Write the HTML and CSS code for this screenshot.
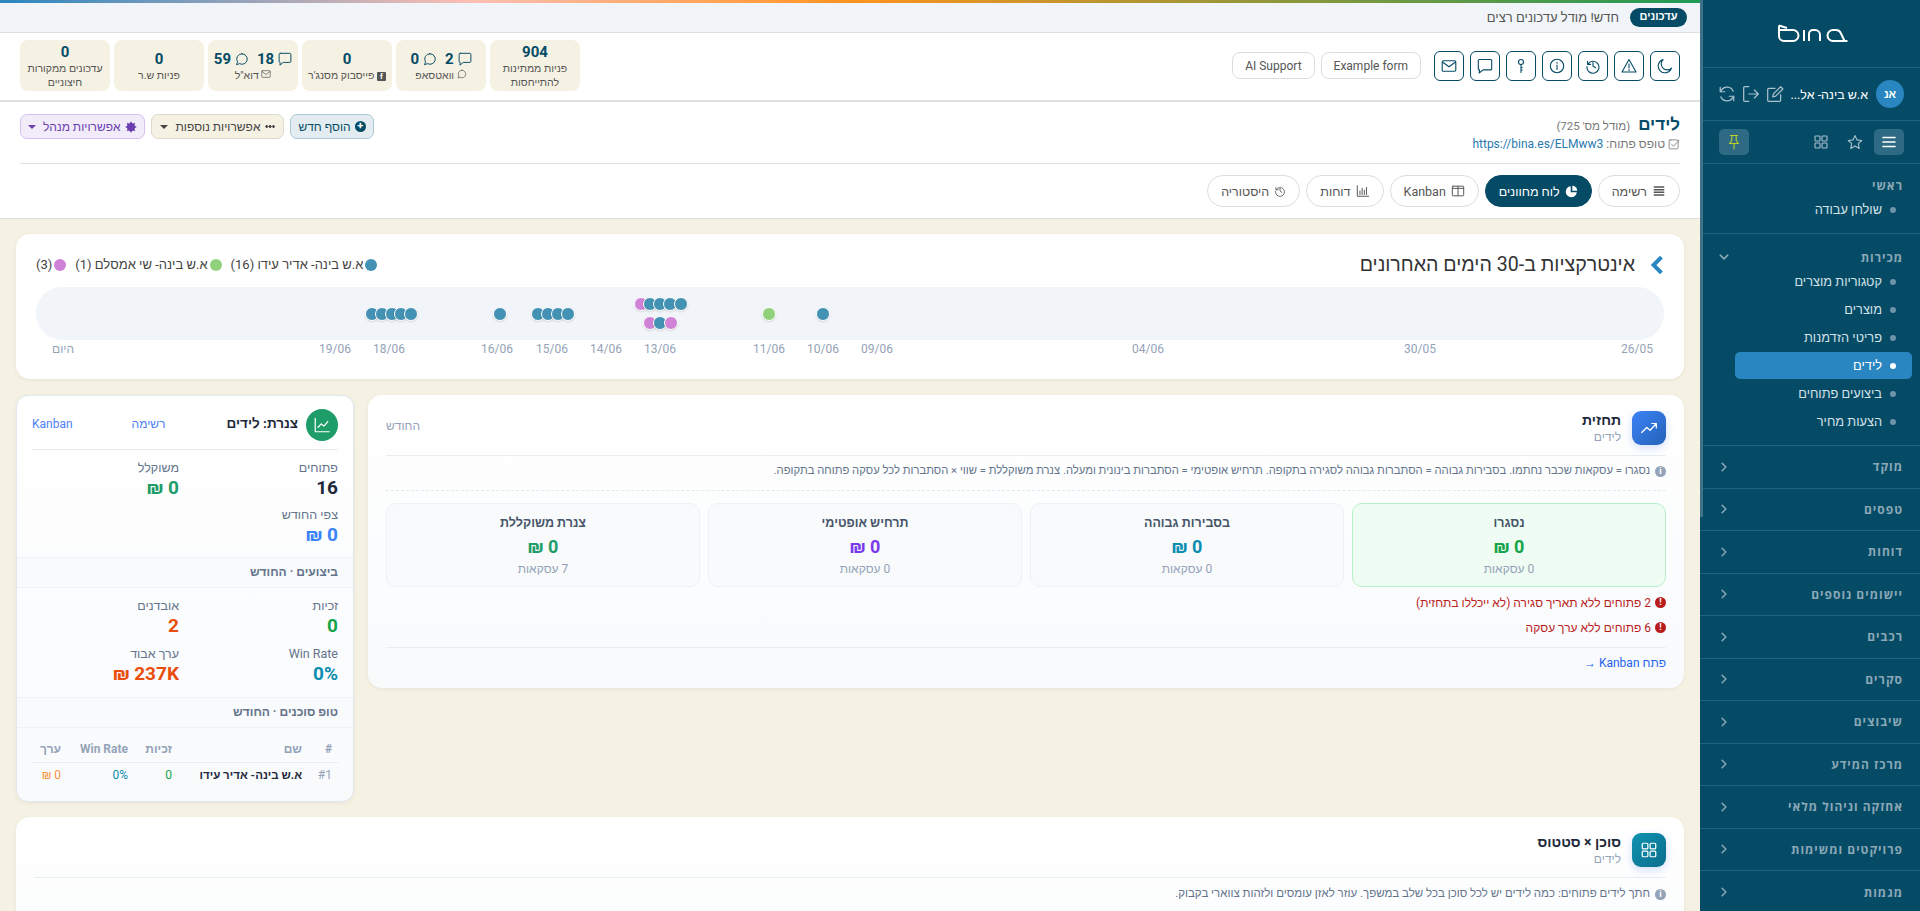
FILE: index.html
```html
<!DOCTYPE html>
<html lang="he" dir="rtl">
<head>
    <meta charset="UTF-8" />
    <title>לידים - Bina</title>
    <link rel="stylesheet" href="styles.css">
</head>
<body>
    <svg class="sprite" xmlns="http://www.w3.org/2000/svg">
        <symbol id="i-moon" viewBox="0 0 16 16"><path d="M6 1.500a6.800 6.800 0 1 0 8.500 8.600A6 6 0 0 1 6 1.500z"/></symbol>
        <symbol id="i-warn" viewBox="0 0 16 16"><path d="M8 1.500 15 14H1zM8 6v4M8 11.600v.8"/></symbol>
        <symbol id="i-history" viewBox="0 0 16 16"><path d="M2.600 3.400v3h3M2.800 6.200A6 6 0 1 1 2 8.500M8 4.500V8l2.500 1.800"/></symbol>
        <symbol id="i-info" viewBox="0 0 16 16"><circle cx="8" cy="8" r="6.700"/><path d="M8 7v4.500M8 4.300v.9"/></symbol>
        <symbol id="i-key" viewBox="0 0 16 16"><circle cx="8" cy="4" r="2.500"/><path d="M8 6.500v8M8 9.500h1.200M8 12h1.200"/></symbol>
        <symbol id="i-chat" viewBox="0 0 16 16"><path d="M2.500 1.500h11a1.200 1.200 0 0 1 1.200 1.200v8a1.200 1.200 0 0 1-1.200 1.200H6L2.200 15l.3-3.100a1.200 1.200 0 0 1-1.200-1.200v-8a1.200 1.200 0 0 1 1.200-1.200z"/></symbol>
        <symbol id="i-round" viewBox="0 0 16 16"><path d="M8 2a6 6 0 1 1-2.800 11.300L1.800 14.500l1.100-3.300A6 6 0 0 1 8 2z"/></symbol>
        <symbol id="i-mail" viewBox="0 0 16 16"><rect x="1.200" y="2.700" width="13.600" height="10.600" rx="1.200"/><path d="m1.500 4 6.500 4.800L14.500 4"/></symbol>
        <symbol id="i-list" viewBox="0 0 16 16"><path d="M2 3.500h12M2 6.500h12M2 9.500h12M2 12.500h12"/></symbol>
        <symbol id="i-menu" viewBox="0 0 16 16"><path d="M2 3.500h12M2 8h12M2 12.500h12"/></symbol>
        <symbol id="i-columns" viewBox="0 0 16 16"><rect x="1.500" y="2.500" width="13" height="11" rx=".8"/><path d="M8 2.500v11M1.500 5h13"/></symbol>
        <symbol id="i-bars" viewBox="0 0 16 16"><path d="M1.500 2v12h13M4.500 12V8M7 12V5M9.500 12V7M12 12V4"/></symbol>
        <symbol id="i-chevron" viewBox="0 0 16 16"><path d="m5.500 3 5 5-5 5"/></symbol>
        <symbol id="i-check" viewBox="0 0 16 16"><rect x="1.500" y="2.500" width="12" height="12" rx="1.500"/><path d="m4.500 8 3 3 7-8"/></symbol>
        <symbol id="i-trend" viewBox="0 0 16 16"><path d="m1.500 12 4.500-4.500 3 2.500L14.500 4M10.500 4h4v4"/></symbol>
        <symbol id="i-line" viewBox="0 0 16 16"><path d="M2 2v12h12.500M4.500 10l2.800-3 2.400 2 3.400-4"/></symbol>
        <symbol id="i-grid" viewBox="0 0 16 16"><rect x="2" y="2" width="5" height="5" rx=".8"/><rect x="9" y="2" width="5" height="5" rx=".8"/><rect x="2" y="9" width="5" height="5" rx=".8"/><rect x="9" y="9" width="5" height="5" rx=".8"/></symbol>
        <symbol id="i-star" viewBox="0 0 16 16"><path d="m8 1.600 2 4.300 4.700.6-3.400 3.200.9 4.700L8 12.100l-4.200 2.300.9-4.700-3.400-3.200L6 5.900z"/></symbol>
        <symbol id="i-pin" viewBox="0 0 16 16"><path d="M4.500 1.500h7M5.800 1.500v5L3.500 9.500h9l-2.300-3v-5M8 9.500V15"/></symbol>
        <symbol id="i-sync" viewBox="0 0 16 16"><path d="M13.500 5.500A6 6 0 0 0 3 4.500L2 6M2.500 10.500A6 6 0 0 0 13 11.500L14 10M2 2v4h4M14 14v-4h-4"/></symbol>
        <symbol id="i-logout" viewBox="0 0 16 16"><path d="M6 1.500H2.500a1 1 0 0 0-1 1v11a1 1 0 0 0 1 1H6M6 8h8.500M11 4.500 14.500 8 11 11.500"/></symbol>
        <symbol id="i-edit" viewBox="0 0 16 16"><path d="M13 8.500v5a1 1 0 0 1-1 1H2.500a1 1 0 0 1-1-1V4a1 1 0 0 1 1-1H8M6 10.500l.6-2.600L13 1.500l2 2-6.400 6.400z"/></symbol>
    </svg>

    <aside class="sidebar">
        <div class="side-logo">
            <svg class="logo" viewBox="0 0 70 18" aria-label="bina">
                <path d="M1 1.500 9 4M1 1.500V12a5 5 0 0 0 5 5h9a5.500 5.500 0 0 0 0-11H1M26 6v11M31 17V10a4 4 0 0 1 4-4h2a5 5 0 0 1 5 5v6M69.500 17H66.500L63 9.500A5.500 5.500 0 0 0 58 6h-3a5.500 5.500 0 0 0 0 11h11"/>
            </svg>
        </div>
        <div class="side-user">
            <span class="avatar">אנ</span>
            <span class="user-name">א.ש בינה- אל...</span>
            <span class="user-tools">
                <svg class="ic ic-18"><use href="#i-edit"/></svg>
                <svg class="ic ic-18"><use href="#i-logout"/></svg>
                <svg class="ic ic-18"><use href="#i-sync"/></svg>
            </span>
        </div>
        <div class="side-tabs">
            <span class="side-tab active"><svg class="ic ic-16"><use href="#i-menu"/></svg></span>
            <span class="side-tab"><svg class="ic ic-16"><use href="#i-star"/></svg></span>
            <span class="side-tab"><svg class="ic ic-16"><use href="#i-grid"/></svg></span>
            <span class="side-tab pin"><svg class="ic ic-16"><use href="#i-pin"/></svg></span>
        </div>
        <nav class="side-nav">
            <div class="nav-group">
                <div class="nav-title"><span>ראשי</span></div>
                <a class="nav-item">שולחן עבודה</a>
            </div>
            <div class="nav-group open">
                <div class="nav-title"><span>מכירות</span><svg class="ic ic-12 down"><use href="#i-chevron"/></svg></div>
                <a class="nav-item">קטגוריות מוצרים</a>
                <a class="nav-item">מוצרים</a>
                <a class="nav-item">פריטי הזדמנות</a>
                <a class="nav-item current">לידים</a>
                <a class="nav-item">ביצועים פתוחים</a>
                <a class="nav-item">הצעות מחיר</a>
            </div>
            <div class="nav-row"><span>מוקד</span><svg class="ic ic-12"><use href="#i-chevron"/></svg></div>
            <div class="nav-row"><span>טפסים</span><svg class="ic ic-12"><use href="#i-chevron"/></svg></div>
            <div class="nav-row"><span>דוחות</span><svg class="ic ic-12"><use href="#i-chevron"/></svg></div>
            <div class="nav-row"><span>יישומים נוספים</span><svg class="ic ic-12"><use href="#i-chevron"/></svg></div>
            <div class="nav-row"><span>רכבים</span><svg class="ic ic-12"><use href="#i-chevron"/></svg></div>
            <div class="nav-row"><span>סקרים</span><svg class="ic ic-12"><use href="#i-chevron"/></svg></div>
            <div class="nav-row"><span>שיבוצים</span><svg class="ic ic-12"><use href="#i-chevron"/></svg></div>
            <div class="nav-row"><span>מרכז המידע</span><svg class="ic ic-12"><use href="#i-chevron"/></svg></div>
            <div class="nav-row"><span>אחזקה וניהול מלאי</span><svg class="ic ic-12"><use href="#i-chevron"/></svg></div>
            <div class="nav-row"><span>פרויקטים ומשימות</span><svg class="ic ic-12"><use href="#i-chevron"/></svg></div>
            <div class="nav-row"><span>מגמות</span><svg class="ic ic-12"><use href="#i-chevron"/></svg></div>
        </nav>
        <div class="side-thumb"></div>
    </aside>

    <main class="main">
        <div class="grad-bar"></div>
        <div class="update-strip">
            <span class="update-pill">עדכונים</span>
            <span class="update-text">חדש! מודל עדכונים רצים</span>
        </div>

        <header class="top-row">
            <div class="top-actions">
                <div class="icon-btns">
                    <button class="icon-btn"><svg class="ic ic-16"><use href="#i-moon"/></svg></button>
                    <button class="icon-btn"><svg class="ic ic-16"><use href="#i-warn"/></svg></button>
                    <button class="icon-btn"><svg class="ic ic-16"><use href="#i-history"/></svg></button>
                    <button class="icon-btn"><svg class="ic ic-16"><use href="#i-info"/></svg></button>
                    <button class="icon-btn"><svg class="ic ic-16"><use href="#i-key"/></svg></button>
                    <button class="icon-btn"><svg class="ic ic-16"><use href="#i-chat"/></svg></button>
                    <button class="icon-btn"><svg class="ic ic-16"><use href="#i-mail"/></svg></button>
                </div>
                <div class="soft-btns">
                    <button class="soft-btn">Example form</button>
                    <button class="soft-btn">AI Support</button>
                </div>
            </div>
            <div class="stat-cards">
                <div class="stat-card"><b>904</b><small>פניות ממתינות להתייחסות</small></div>
                <div class="stat-card">
                    <b class="stat-line"><svg class="ic ic-14"><use href="#i-chat"/></svg>2<svg class="ic ic-14"><use href="#i-round"/></svg>0</b>
                    <small><svg class="ic ic-10"><use href="#i-round"/></svg> וואטסאפ</small>
                </div>
                <div class="stat-card">
                    <b>0</b>
                    <small><span class="fb-box">f</span> פייסבוק מסנג'ר</small>
                </div>
                <div class="stat-card">
                    <b class="stat-line"><svg class="ic ic-14"><use href="#i-chat"/></svg>18<svg class="ic ic-14"><use href="#i-round"/></svg>59</b>
                    <small><svg class="ic ic-10"><use href="#i-mail"/></svg> דוא"ל</small>
                </div>
                <div class="stat-card"><b>0</b><small>פניות ש.ר</small></div>
                <div class="stat-card"><b>0</b><small>עדכונים ממקורות חיצוניים</small></div>
            </div>
        </header>

        <section class="page-head">
            <div class="title-row">
                <div>
                    <div class="page-title"><h1>לידים</h1><span>(מודל מס' 725)</span></div>
                    <div class="page-form"><svg class="ic ic-12"><use href="#i-check"/></svg> טופס פתוח: <a>https://bina.es/ELMww3</a></div>
                </div>
                <div class="head-actions">
                    <button class="act-btn act-add"><span class="plus-dot">+</span> הוסף חדש</button>
                    <button class="act-btn act-more"><i class="dots"></i> אפשרויות נוספות <i class="caret"></i></button>
                    <button class="act-btn act-admin"><svg class="gear" viewBox="0 0 16 16"><circle cx="8" cy="8" r="4.500"/><path d="M8 1v14M1 8h14M3 3l10 10M13 3 3 13"/></svg> אפשרויות מנהל <i class="caret"></i></button>
                </div>
            </div>
            <div class="view-tabs">
                <a class="view-tab"><svg class="ic ic-14 bold"><use href="#i-list"/></svg> רשימה</a>
                <a class="view-tab active"><svg class="pie" viewBox="0 0 16 16"><path d="M7 1.500a6.800 6.800 0 1 0 7.500 7.500H7z"/><path d="M9 1a6 6 0 0 1 6 6H9z"/></svg> לוח מחוונים</a>
                <a class="view-tab"><svg class="ic ic-14"><use href="#i-columns"/></svg> Kanban</a>
                <a class="view-tab"><svg class="ic ic-14"><use href="#i-bars"/></svg> דוחות</a>
                <a class="view-tab"><svg class="ic ic-12"><use href="#i-history"/></svg> היסטוריה</a>
            </div>
        </section>

        <div class="content">
            <section class="card timeline">
                <div class="tl-head">
                    <h2><svg class="tl-chev" viewBox="4 1 10 16"><path d="m12.500 2-7 7 7 7"/></svg>אינטרקציות ב-30 הימים האחרונים</h2>
                    <div class="tl-legend">
                        <span><i class="dot-l blue"></i>א.ש בינה- אדיר עידו (16)</span>
                        <span><i class="dot-l green"></i>א.ש בינה- שי אמסלם (1)</span>
                        <span><i class="dot-l pink"></i>(3)</span>
                    </div>
                </div>
                <div class="tl-track">
                    <i class="tl-dot blue row-m" style="left:336px"></i>
                    <i class="tl-dot blue row-m" style="left:346px"></i>
                    <i class="tl-dot blue row-m" style="left:356px"></i>
                    <i class="tl-dot blue row-m" style="left:365px"></i>
                    <i class="tl-dot blue row-m" style="left:375px"></i>
                    <i class="tl-dot blue row-m" style="left:464px"></i>
                    <i class="tl-dot blue row-m" style="left:502px"></i>
                    <i class="tl-dot blue row-m" style="left:512px"></i>
                    <i class="tl-dot blue row-m" style="left:522px"></i>
                    <i class="tl-dot blue row-m" style="left:532px"></i>
                    <i class="tl-dot pink row-t" style="left:605px"></i>
                    <i class="tl-dot blue row-t" style="left:614px"></i>
                    <i class="tl-dot blue row-t" style="left:624px"></i>
                    <i class="tl-dot blue row-t" style="left:634px"></i>
                    <i class="tl-dot blue row-t" style="left:645px"></i>
                    <i class="tl-dot pink row-b" style="left:614px"></i>
                    <i class="tl-dot blue row-b" style="left:624px"></i>
                    <i class="tl-dot pink row-b" style="left:635px"></i>
                    <i class="tl-dot green row-m" style="left:733px"></i>
                    <i class="tl-dot blue row-m" style="left:787px"></i>
                </div>
                <div class="tl-axis">
                    <span style="left:27px">היום</span>
                    <span style="left:299px">19/06</span>
                    <span style="left:353px">18/06</span>
                    <span style="left:461px">16/06</span>
                    <span style="left:516px">15/06</span>
                    <span style="left:570px">14/06</span>
                    <span style="left:624px">13/06</span>
                    <span style="left:733px">11/06</span>
                    <span style="left:787px">10/06</span>
                    <span style="left:841px">09/06</span>
                    <span style="left:1112px">04/06</span>
                    <span style="left:1384px">30/05</span>
                    <span style="left:1601px">26/05</span>
                </div>
            </section>

            <div class="dash-row">
                <section class="card panel forecast">
                    <div class="panel-head">
                        <span class="panel-icon blue-grad"><svg class="ic ic-18"><use href="#i-trend"/></svg></span>
                        <div class="panel-title"><b>תחזית</b><small>לידים</small></div>
                        <span class="panel-period">החודש</span>
                    </div>
                    <p class="panel-note"><i class="note-i">i</i> נסגרו = עסקאות שכבר נחתמו. בסבירות גבוהה = הסתברות גבוהה לסגירה בתקופה. תרחיש אופטימי = הסתברות בינונית ומעלה. צנרת משוקללת = שווי × הסתברות לכל עסקה פתוחה בתקופה.</p>
                    <div class="kpi-grid">
                        <div class="kpi kpi-won"><b>נסגרו</b><strong class="c-green">0 ₪</strong><small>0 עסקאות</small></div>
                        <div class="kpi"><b>בסבירות גבוהה</b><strong class="c-teal">0 ₪</strong><small>0 עסקאות</small></div>
                        <div class="kpi"><b>תרחיש אופטימי</b><strong class="c-purple">0 ₪</strong><small>0 עסקאות</small></div>
                        <div class="kpi"><b>צנרת משוקללת</b><strong class="c-emerald">0 ₪</strong><small>7 עסקאות</small></div>
                    </div>
                    <div class="warn"><i class="warn-i">!</i> 2 פתוחים ללא תאריך סגירה (לא ייכללו בתחזית)</div>
                    <div class="warn"><i class="warn-i">!</i> 6 פתוחים ללא ערך עסקה</div>
                    <div class="panel-foot"><a>פתח Kanban →</a></div>
                </section>

                <section class="card funnel">
                    <div class="fn-head">
                        <span class="fn-icon"><svg class="ic ic-18"><use href="#i-line"/></svg></span>
                        <b class="fn-title">צנרת: לידים</b>
                        <a class="fn-link">רשימה</a>
                        <a class="fn-link">Kanban</a>
                    </div>
                    <div class="fn-stats">
                        <div><label>פתוחים</label><strong class="c-dark">16</strong></div>
                        <div><label>משוקלל</label><strong class="c-emerald">0 ₪</strong></div>
                        <div><label>צפי החודש</label><strong class="c-blue">0 ₪</strong></div>
                    </div>
                    <div class="fn-section">ביצועים · החודש</div>
                    <div class="fn-stats fn-perf">
                        <div><label>זכיות</label><strong class="c-green">0</strong></div>
                        <div><label>אובדנים</label><strong class="c-red">2</strong></div>
                        <div><label>Win Rate</label><strong class="c-teal">0%</strong></div>
                        <div><label>ערך אבוד</label><strong class="c-red">237K ₪</strong></div>
                    </div>
                    <div class="fn-section">טופ סוכנים · החודש</div>
                    <table class="fn-table">
                        <thead>
                            <tr><th>#</th><th>שם</th><th>זכיות</th><th>Win Rate</th><th>ערך</th></tr>
                        </thead>
                        <tbody>
                            <tr><td class="t-rank">#1</td><td class="t-name">א.ש בינה- אדיר עידו</td><td class="c-green">0</td><td class="c-teal">0%</td><td class="c-orange">0 ₪</td></tr>
                        </tbody>
                    </table>
                </section>
            </div>

            <section class="card panel agents">
                <div class="panel-head">
                    <span class="panel-icon teal-grad"><svg class="ic ic-18"><use href="#i-grid"/></svg></span>
                    <div class="panel-title"><b>סוכן × סטטוס</b><small>לידים</small></div>
                </div>
                <p class="panel-note"><i class="note-i">i</i> חתך לידים פתוחים: כמה לידים יש לכל סוכן בכל שלב במשפך. עוזר לאזן עומסים ולזהות צווארי בקבוק.</p>
            </section>
        </div>
    </main>
</body>
</html>
```

FILE: styles.css
```css
* {
    box-sizing: border-box;
}

html, body {
    height: 100%;
}

body {
    margin: 0;
    display: flex;
    overflow: hidden;
    font-family: Roboto, sans-serif;
    font-size: 12px;
    color: #334155;
    background: #f5f1e3;
}

.sprite {
    display: none;
}

.ic {
    fill: none;
    stroke: currentColor;
    stroke-width: 1.1;
    stroke-linecap: round;
    stroke-linejoin: round;
    flex: none;
}

.ic.bold {
    stroke-width: 1.800;
    stroke-linecap: butt;
}

.ic-10 { width: 10px; height: 10px; }
.ic-12 { width: 12px; height: 12px; }
.ic-14 { width: 14px; height: 14px; }
.ic-16 { width: 16px; height: 16px; }
.ic-18 { width: 18px; height: 18px; }

button {
    font-family: inherit;
    cursor: pointer;
}

/* sidebar */
.sidebar {
    position: relative;
    width: 220px;
    flex: none;
    height: 911px;
    background: #054b66;
    color: #dce8ee;
    overflow: hidden;
}

.side-thumb {
    position: absolute;
    left: 0;
    top: 0;
    width: 3px;
    height: 517px;
    background: #3f7288;
}

.side-logo {
    height: 68px;
    padding-top: 24px;
    display: flex;
    justify-content: center;
    border-bottom: 1px solid #1f6480;
}

.logo {
    width: 70px;
    height: 18px;
    margin-left: 6px;
    fill: none;
    stroke: #fff;
    stroke-width: 2;
}

.side-user {
    height: 53px;
    display: flex;
    align-items: center;
    padding: 0 16px 0 18px;
    border-bottom: 1px solid #1f6480;
}

.avatar {
    width: 28px;
    height: 28px;
    border-radius: 50%;
    background: #2a86c0;
    color: #fff;
    font-size: 11px;
    font-weight: 700;
    display: flex;
    align-items: center;
    justify-content: center;
}

.user-name {
    margin-right: 8px;
    color: #fff;
    font-size: 12.500px;
    white-space: nowrap;
}

.user-tools {
    margin-right: auto;
    display: flex;
    gap: 6px;
    color: #a9c1cd;
}

.side-tabs {
    height: 43px;
    display: flex;
    align-items: center;
    gap: 4px;
    padding: 0 16px 0 19px;
    border-bottom: 1px solid #1f6480;
    color: #a9c1cd;
}

.side-tab {
    width: 30px;
    height: 26px;
    border-radius: 5px;
    display: flex;
    align-items: center;
    justify-content: center;
}

.side-tab.active {
    background: #2f6a84;
    color: #fff;
}

.side-tab.active .ic {
    stroke-width: 1.600;
}

.side-tab.pin {
    margin-right: auto;
    background: #2f6a84;
    color: #bcd12a;
}

.nav-group {
    padding-top: 12px;
    border-bottom: 1px solid #1f6480;
}

.nav-title,
.nav-row {
    display: flex;
    align-items: center;
    justify-content: space-between;
    padding: 0 17px 0 18px;
    color: #8ba8b7;
    font-family: "Open Sans", sans-serif;
    font-weight: 700;
    font-size: 12px;
    letter-spacing: 1px;
}

.nav-title .ic,
.nav-row .ic {
    stroke-width: 2;
}

.nav-title {
    height: 22px;
}

.nav-row {
    height: 42.500px;
    border-bottom: 1px solid #1f6480;
}

.nav-row:last-child {
    border-bottom: none;
}

.nav-group .ic.down {
    transform: rotate(90deg);
}

.nav-item {
    position: relative;
    display: block;
    height: 27px;
    line-height: 27px;
    margin: 0 8px 1px 8px;
    padding-right: 30px;
    border-radius: 5px;
    color: #d3e1e8;
    font-size: 12.800px;
}

.nav-item::before {
    content: "";
    position: absolute;
    right: 16px;
    top: 11px;
    width: 6px;
    height: 6px;
    border-radius: 50%;
    background: #6d93a8;
}

.nav-item.current {
    margin-left: 35px;
    background: #2a86c0;
    color: #fff;
    font-weight: 500;
}

.nav-item.current::before {
    background: #fff;
}

.nav-group:first-child {
    height: 70px;
    padding-top: 10px;
}

.nav-group.open {
    height: 212px;
}

/* main */
.main {
    flex: 1;
    min-width: 0;
    height: 911px;
    overflow: hidden;
}

.grad-bar {
    height: 3px;
    background: linear-gradient(90deg, #2a86c0 0, #ffbfb3 28%, #ff931f 50%, #1f9b57 100%);
}

.update-strip {
    height: 30px;
    display: flex;
    align-items: center;
    gap: 11px;
    padding: 0 13px;
    background: #f1f5f9;
    border-bottom: 1px solid #e0e0e0;
}

.update-pill {
    width: 57px;
    height: 19px;
    line-height: 18px;
    text-align: center;
    border-radius: 10px;
    background: #054b66;
    color: #fff;
    font-size: 11px;
    font-weight: 700;
}

.update-text {
    font-size: 13px;
    color: #555;
}

.top-row {
    height: 69px;
    display: flex;
    align-items: center;
    justify-content: space-between;
    padding: 0 20px 2px;
    background: #fff;
    border-bottom: 2px solid #e0e0e0;
}

.top-actions {
    display: flex;
    align-items: center;
    gap: 13px;
}

.icon-btns {
    display: flex;
    gap: 6px;
}

.soft-btns {
    display: flex;
    gap: 6px;
}

.icon-btn {
    width: 30px;
    height: 30px;
    padding: 0;
    display: flex;
    align-items: center;
    justify-content: center;
    border: 1px solid #054b66;
    border-radius: 6px;
    background: #fff;
    color: #054b66;
}

.soft-btn {
    height: 27px;
    padding: 0 12px;
    border: 1px solid #ddd;
    border-radius: 8px;
    background: #fff;
    color: #555;
    font-size: 12px;
}

.stat-cards {
    display: flex;
    gap: 4px;
}

.stat-card {
    width: 90px;
    height: 51px;
    padding: 2px 6px;
    display: flex;
    flex-direction: column;
    align-items: center;
    justify-content: center;
    text-align: center;
    border-radius: 8px;
    background: #f5f1e3;
    color: #555;
}

.stat-card b {
    color: #054b66;
    font-size: 15px;
    line-height: 20px;
}

.stat-line {
    display: flex;
    align-items: center;
    gap: 4px;
}

.stat-line .ic:nth-of-type(2) {
    margin-right: 4px;
}

.stat-card small {
    font-size: 10.500px;
    line-height: 14px;
}

.fb-box {
    display: inline-block;
    width: 9px;
    height: 9px;
    line-height: 10px;
    border-radius: 1px;
    background: #555;
    color: #fff;
    font-size: 8px;
    font-weight: 700;
}

.page-head {
    height: 117px;
    padding: 0 20px;
    background: #fff;
    border-bottom: 1px solid #e0e0e0;
}

.title-row {
    height: 62px;
    display: flex;
    justify-content: space-between;
    border-bottom: 1px solid #e0e0e0;
}

.page-title {
    display: flex;
    align-items: baseline;
    gap: 8px;
    padding-top: 12px;
    height: 33px;
}

.page-title h1 {
    margin: 0;
    font-size: 17px;
    line-height: 20px;
    color: #054b66;
}

.page-title span {
    font-size: 11.500px;
    color: #777;
}

.page-form {
    display: flex;
    align-items: center;
    gap: 3px;
    font-size: 12px;
    color: #777;
    line-height: 18px;
}

.page-form a {
    color: #2a7ab0;
}

.head-actions {
    display: flex;
    align-items: flex-start;
    gap: 6px;
    padding-top: 12px;
}

.act-btn {
    height: 25px;
    padding: 0 7px;
    display: flex;
    align-items: center;
    gap: 4px;
    border-radius: 7px;
    font-size: 12px;
    white-space: nowrap;
}

.act-add {
    background: #e3edf1;
    border: 1px solid #adc7d3;
    color: #054b66;
}

.act-more {
    padding: 0 8px;
    gap: 5px;
    background: #f5f1e3;
    border: 1px solid #ddd9cb;
    color: #444;
}

.act-admin {
    background: #f1ebfa;
    border: 1px solid #d3c1ef;
    color: #6b3fb0;
}

.plus-dot {
    width: 11px;
    height: 11px;
    line-height: 10px;
    border-radius: 50%;
    background: #054b66;
    color: #fff;
    font-weight: 700;
    text-align: center;
    font-size: 11px;
}

.dots {
    width: 10px;
    height: 3px;
    background: radial-gradient(circle, currentColor 1.200px, transparent 1.500px) 0 0 / 3.400px 3px;
}

.caret {
    width: 0;
    height: 0;
    margin-right: 3px;
    border-top: 4px solid currentColor;
    border-left: 4px solid transparent;
    border-right: 4px solid transparent;
}

.gear {
    width: 12px;
    height: 12px;
    fill: #6b3fb0;
    stroke: #6b3fb0;
    stroke-width: 2;
}

.view-tabs {
    display: flex;
    gap: 6px;
    padding-top: 11px;
}

.view-tab {
    height: 32px;
    padding: 0 13px;
    display: flex;
    align-items: center;
    gap: 5px;
    border: 1px solid #ddd;
    border-radius: 16px;
    background: #fff;
    color: #555;
    font-size: 12.500px;
}

.view-tab.active {
    background: #054b66;
    border-color: #054b66;
    color: #fff;
    font-weight: 500;
}

.pie {
    width: 13px;
    height: 13px;
    fill: #fff;
}

/* content */
.content {
    padding: 15px 16px;
}

.card {
    background: #fff;
    border-radius: 14px;
    box-shadow: 0 1px 4px rgba(15, 23, 42, .06);
}

.timeline {
    height: 145px;
    padding: 0 20px;
    margin-bottom: 16px;
}

.tl-head {
    height: 53px;
    padding-top: 8px;
    display: flex;
    align-items: center;
    justify-content: space-between;
}

.tl-head h2 {
    margin: 0;
    display: flex;
    align-items: center;
    gap: 16px;
    font-size: 19.600px;
    font-weight: 400;
    color: #333;
}

.tl-chev {
    width: 13px;
    height: 18px;
    fill: none;
    stroke: #2a86c0;
    stroke-width: 3.500;
}

.tl-legend {
    display: flex;
    gap: 9px;
    font-size: 13px;
    color: #444;
}

.tl-legend span {
    display: flex;
    align-items: center;
    gap: 2px;
}

.dot-l {
    width: 12px;
    height: 12px;
    border-radius: 50%;
}

.blue { background: #4391b3; }
.green { background: #92d17c; }
.pink { background: #d083d6; }

.tl-track {
    position: relative;
    height: 53px;
    background: #f1f5f9;
    border-radius: 26px;
}

.tl-dot {
    position: absolute;
    width: 14px;
    height: 14px;
    margin-left: -7px;
    border: 1px solid #fff;
    border-radius: 50%;
    box-shadow: 0 1px 2px rgba(0, 0, 0, .12);
}

.row-t { top: 10px; }
.row-m { top: 20px; }
.row-b { top: 29px; }

.tl-axis {
    position: relative;
    height: 20px;
    color: #94a3b8;
    font-size: 12px;
}

.tl-axis span {
    position: absolute;
    top: 2px;
    transform: translateX(-50%);
}

.dash-row {
    display: flex;
    align-items: flex-start;
    gap: 14px;
    margin-bottom: 15px;
}

.panel {
    padding: 16px 18px 0;
    background: linear-gradient(180deg, #fff 0, #f8fafc 100%);
}

.forecast {
    flex: 1;
    height: 293px;
}

.panel-head {
    height: 45px;
    display: flex;
    align-items: flex-start;
    gap: 11px;
    border-bottom: 1px solid #e8edf3;
}

.panel-icon {
    width: 34px;
    height: 34px;
    border-radius: 9px;
    display: flex;
    align-items: center;
    justify-content: center;
    color: #fff;
    box-shadow: 0 3px 8px rgba(37, 99, 235, .2);
}

.blue-grad { background: linear-gradient(135deg, #3b82f6, #2563b8); }
.teal-grad { background: linear-gradient(135deg, #0e94b0, #0b6c8d); }

.panel-title {
    display: flex;
    flex-direction: column;
}

.panel-title b {
    font-size: 14px;
    line-height: 18px;
    color: #1e293b;
}

.panel-title small {
    font-size: 12px;
    line-height: 16px;
    color: #94a3b8;
}

.panel-period {
    margin-right: auto;
    margin-top: 8px;
    color: #94a3b8;
    font-size: 12px;
}

.panel-note {
    height: 35px;
    line-height: 30px;
    margin: 0 0 12px;
    border-bottom: 1px dashed #e2e8f0;
    color: #64748b;
    font-size: 11.500px;
    white-space: nowrap;
}

.forecast .panel-note {
    font-size: 11.250px;
}

.note-i {
    display: inline-block;
    width: 11px;
    height: 11px;
    line-height: 11px;
    margin-left: 2px;
    border-radius: 50%;
    background: #94a3b8;
    color: #fff;
    text-align: center;
    font-size: 9px;
    font-weight: 700;
    font-style: normal;
}

.kpi-grid {
    display: grid;
    grid-template-columns: repeat(4, 1fr);
    gap: 8px;
    margin-bottom: 3px;
}

.kpi {
    height: 84px;
    display: flex;
    flex-direction: column;
    align-items: center;
    padding-top: 10px;
    border: 1px solid #eef1f6;
    border-radius: 10px;
    background: #f8fafc;
}

.kpi b {
    font-size: 12.500px;
    line-height: 18px;
    color: #475569;
}

.kpi strong {
    margin-top: 2px;
    font-size: 18px;
    line-height: 26px;
}

.kpi small {
    font-size: 12px;
    line-height: 18px;
    color: #94a3b8;
}

.kpi-won {
    background: #effcf3;
    border-color: #b7f0c8;
}

.c-green { color: #16a34a; }
.c-emerald { color: #1f9d68; }
.c-teal { color: #0b8db0; }
.c-purple { color: #7c3aed; }
.c-blue { color: #3b82f6; }
.c-red { color: #ea4e0c; }
.c-dark { color: #1e293b; }
.c-orange { color: #fb923c; }

.warn {
    display: flex;
    align-items: center;
    gap: 4px;
    height: 25px;
    color: #b91c1c;
    font-size: 12px;
}

.warn-i {
    width: 11px;
    height: 11px;
    line-height: 11px;
    border-radius: 50%;
    background: #b91c1c;
    color: #fff;
    text-align: center;
    font-size: 9px;
    font-weight: 700;
    font-style: normal;
}

.panel-foot {
    margin-top: 7px;
    padding-top: 8px;
    border-top: 1px solid #e8edf3;
    color: #2563eb;
    font-size: 12px;
}

.funnel {
    width: 338px;
    height: 407px;
    flex: none;
    border: 1px solid #e2e8f0;
    border-radius: 12px;
    background: linear-gradient(180deg, #fff 0, #f8fafc 100%);
}

.fn-head {
    height: 41px;
    margin: 13px 15px 0;
    display: flex;
    align-items: flex-start;
    gap: 8px;
    border-bottom: 1px solid #e8edf3;
}

.fn-icon {
    width: 32px;
    height: 32px;
    border-radius: 50%;
    background: #1f9d68;
    color: #fff;
    display: flex;
    align-items: center;
    justify-content: center;
}

.fn-title {
    margin-top: 6px;
    font-size: 13.500px;
    color: #1e293b;
}

.fn-link {
    margin-top: 8px;
    color: #4f80f7;
    font-size: 12px;
}

.fn-link:nth-of-type(1) {
    margin-right: auto;
}

.fn-link:nth-of-type(2) {
    margin-right: 51px;
}

.fn-stats {
    display: grid;
    grid-template-columns: repeat(2, 147px);
    gap: 7px 12px;
    padding: 9px 15px 11px;
}

.fn-perf {
    gap: 8px 12px;
    padding-bottom: 12px;
}

.fn-stats label {
    display: block;
    line-height: 18px;
    color: #64748b;
    font-size: 12.500px;
}

.fn-stats strong {
    display: block;
    font-size: 19px;
    line-height: 22px;
}

.fn-section {
    height: 31px;
    line-height: 29px;
    padding: 0 15px;
    background: #f8fafc;
    border-top: 1px solid #eef1f6;
    border-bottom: 1px solid #eef1f6;
    color: #64748b;
    font-size: 12px;
    font-weight: 700;
}

.fn-table {
    width: 306px;
    margin: 8px 15px 0;
    border-collapse: collapse;
    table-layout: fixed;
    font-size: 12px;
}

.fn-table th {
    height: 26px;
    padding: 0 6px;
    text-align: right;
    color: #94a3b8;
    font-size: 12px;
    white-space: nowrap;
    border-bottom: 1px solid #e8edf3;
}

.fn-table th:nth-child(1) { width: 30px; }
.fn-table th:nth-child(2) { width: 130px; }
.fn-table th:nth-child(3) { width: 44px; }
.fn-table th:nth-child(4) { width: 67px; }
.fn-table th:nth-child(5) { width: 35px; }

.fn-table td {
    height: 26px;
    padding: 0 6px;
    white-space: nowrap;
}

.t-rank {
    color: #94a3b8;
}

.t-name {
    font-size: 11.500px;
    font-weight: 700;
    color: #1e293b;
}

.agents {
    height: 200px;
}
```
